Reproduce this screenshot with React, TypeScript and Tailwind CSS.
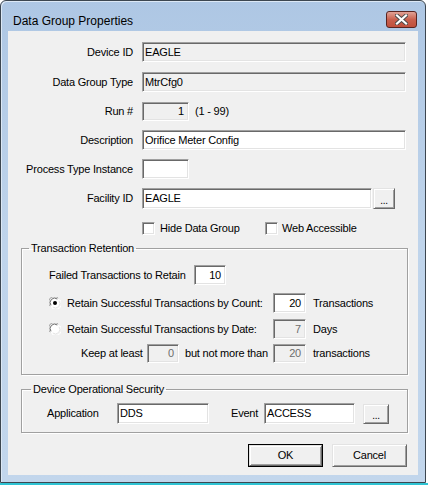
import React from 'react';

const sunken =
  'border border-t-[#a0a0a0] border-l-[#a0a0a0] border-r-white border-b-white shadow-[inset_1px_1px_0_#696969,inset_-1px_-1px_0_#e3e3e3]';
const raised =
  'border border-t-[#e3e3e3] border-l-[#e3e3e3] border-r-[#696969] border-b-[#696969] shadow-[inset_1px_1px_0_#ffffff,inset_-1px_-1px_0_#a0a0a0] bg-[#f0f0f0]';

const Box: React.FC<{ className: string; white?: boolean; right?: boolean; gray?: boolean; children?: React.ReactNode }> = ({
  className,
  white,
  right,
  gray,
  children,
}) => (
  <div
    className={`${className} ${sunken} ${white ? 'bg-white' : 'bg-[#f0f0f0]'} ${right ? 'justify-end pr-[4px]' : 'pl-[2px]'} ${
      gray ? 'text-[#6d6d6d]' : 'text-black'
    } flex items-center shrink-0 leading-[13px]`}
  >
    {children}
  </div>
);

const Row: React.FC<{ label: string; className?: string; children: React.ReactNode }> = ({ label, className, children }) => (
  <div className={`flex items-center ${className ?? ''}`}>
    <span className="w-[125px] text-right mr-[9px] shrink-0">{label}</span>
    {children}
  </div>
);

const Check: React.FC = () => <span className={`w-[13px] h-[13px] bg-white shrink-0 ${sunken}`} />;

const Radio: React.FC<{ on?: boolean }> = ({ on }) => (
  <svg width="12" height="12" viewBox="0 0 12 12" className="shrink-0">
    <circle cx="6" cy="6" r="5.5" fill="#ffffff" />
    <path d="M1.2 9.2 A5.5 5.5 0 0 1 9.2 1.2" fill="none" stroke="#a0a0a0" strokeWidth="1" />
    <path d="M2 8.3 A4.5 4.5 0 0 1 8.3 2" fill="none" stroke="#696969" strokeWidth="1" />
    <path d="M10.8 2.8 A5.5 5.5 0 0 1 2.8 10.8" fill="none" stroke="#ffffff" strokeWidth="1" />
    <path d="M10 3.7 A4.5 4.5 0 0 1 3.7 10" fill="none" stroke="#e3e3e3" strokeWidth="1" />
    {on && <circle cx="6" cy="6" r="2" fill="#000000" />}
  </svg>
);

const SmallButton: React.FC<{ className: string }> = ({ className }) => (
  <div className={`${className} ${raised} flex items-end justify-center pb-[3px] shrink-0 text-[10px] leading-[8px]`}>...</div>
);

const App: React.FC = () => {
  return (
    <div className="w-[428px] h-[485px] bg-white font-['Liberation_Sans',Arial,sans-serif] text-[11px] leading-[13px] tracking-[-0.2px] text-black">
      <div className="w-[426px] h-[483px] flex flex-col rounded-t-[6px] border border-[#3c4650] bg-gradient-to-b from-[#aec7e4] via-[#bfd4eb] to-[#c2d6ec] shadow-[inset_1px_1px_0_#dce8f5]">
        {/* Title bar */}
        <div className="h-[30px] flex items-start justify-between shrink-0">
          <span className="pl-[12px] pt-[13px] text-[12px] leading-[14px] tracking-normal">Data Group Properties</span>
          <div className="mt-[10px] mr-[8px] w-[31px] h-[17px] rounded-[3px] border border-[#5a2420] bg-gradient-to-b from-[#e0a296] via-[#c9604e] to-[#c0503c] flex items-center justify-center">
            <svg width="13" height="11" viewBox="0 0 13 11">
              <path d="M2 1.5 L11 9.5 M11 1.5 L2 9.5" stroke="#4a4a4a" strokeWidth="4" strokeLinecap="square" />
              <path d="M2 1.5 L11 9.5 M11 1.5 L2 9.5" stroke="#ffffff" strokeWidth="2.2" strokeLinecap="square" />
            </svg>
          </div>
        </div>

        {/* Client area */}
        <div className="ml-[7px] w-[410px] h-[444px] bg-[#f0f0f0] shrink-0 flex flex-col">
          <div className="pt-[11px] flex flex-col">
            <Row label="Device ID">
              <Box className="w-[264px] h-[20px]">EAGLE</Box>
            </Row>
            <Row label="Data Group Type" className="mt-[10px]">
              <Box className="w-[264px] h-[20px]">MtrCfg0</Box>
            </Row>
            <Row label="Run #" className="mt-[10px]">
              <Box className="w-[47px] h-[19px]" right>
                1
              </Box>
              <span className="ml-[6px]">(1 - 99)</span>
            </Row>
            <Row label="Description" className="mt-[9px]">
              <Box className="w-[264px] h-[20px]" white>
                Orifice Meter Config
              </Box>
            </Row>
            <Row label="Process Type Instance" className="mt-[9px]">
              <Box className="w-[47px] h-[20px]" white />
            </Row>
            <Row label="Facility ID" className="mt-[9px]">
              <Box className="w-[230px] h-[21px]" white>
                EAGLE
              </Box>
              <SmallButton className="ml-[1px] w-[22px] h-[21px]" />
            </Row>
            <div className="mt-[13px] ml-[134px] flex items-center">
              <div className="w-[123px] flex items-center">
                <Check />
                <span className="ml-[5px]">Hide Data Group</span>
              </div>
              <Check />
              <span className="ml-[4px]">Web Accessible</span>
            </div>
          </div>

          {/* Transaction Retention */}
          <fieldset className="mt-[7px] ml-[13px] w-[387px] border border-[#a0a0a0] shadow-[1px_1px_0_#ffffff,inset_1px_1px_0_#ffffff]">
            <legend className="ml-[7px] px-[2px] leading-[13px]">Transaction Retention</legend>
            <div className="pt-[10px] pb-[11px] pl-[27px] flex flex-col">
              <div className="flex items-center">
                <span className="w-[145px] shrink-0">Failed Transactions to Retain</span>
                <Box className="w-[32px] h-[20px]" white right>
                  10
                </Box>
              </div>
              <div className="mt-[8px] flex items-center">
                <Radio on />
                <span className="ml-[6px] w-[206px] shrink-0">Retain Successful Transactions by Count:</span>
                <Box className="w-[33px] h-[20px]" white right>
                  20
                </Box>
                <span className="ml-[7px]">Transactions</span>
              </div>
              <div className="mt-[6px] flex items-center">
                <Radio />
                <span className="ml-[6px] w-[206px] shrink-0">Retain Successful Transactions by Date:</span>
                <Box className="w-[33px] h-[20px]" right gray>
                  7
                </Box>
                <span className="ml-[7px]">Days</span>
              </div>
              <div className="mt-[5px] pl-[32px] flex items-center">
                <span className="w-[66px] shrink-0">Keep at least</span>
                <Box className="w-[32px] h-[19px]" right gray>
                  0
                </Box>
                <span className="ml-[6px] w-[88px] shrink-0">but not more than</span>
                <Box className="w-[33px] h-[19px]" right gray>
                  20
                </Box>
                <span className="ml-[7px]">transactions</span>
              </div>
            </div>
          </fieldset>

          {/* Device Operational Security */}
          <fieldset className="mt-[8px] ml-[13px] w-[387px] border border-[#a0a0a0] shadow-[1px_1px_0_#ffffff,inset_1px_1px_0_#ffffff]">
            <legend className="ml-[9px] px-[2px] leading-[13px]">Device Operational Security</legend>
            <div className="pt-[7px] pb-[8px] pl-[25px] flex items-center">
              <span className="w-[70px] shrink-0">Application</span>
              <Box className="w-[92px] h-[21px]" white>
                DDS
              </Box>
              <span className="ml-[22px] w-[33px] shrink-0">Event</span>
              <Box className="w-[91px] h-[21px]" white>
                ACCESS
              </Box>
              <SmallButton className="ml-[8px] w-[26px] h-[20px]" />
            </div>
          </fieldset>

          {/* Buttons */}
          <div className="mt-[11px] pr-[11px] flex justify-end">
            <div className="w-[75px] h-[23px] border border-[#000000] flex">
              <div className={`flex-1 ${raised} flex items-center justify-center`}>OK</div>
            </div>
            <div className={`ml-[9px] w-[75px] h-[23px] ${raised} flex items-center justify-center`}>Cancel</div>
          </div>
        </div>
      </div>
      <div className="w-[428px] h-[2px] bg-[#2ec3d3]" />
    </div>
  );
};

export default App;
